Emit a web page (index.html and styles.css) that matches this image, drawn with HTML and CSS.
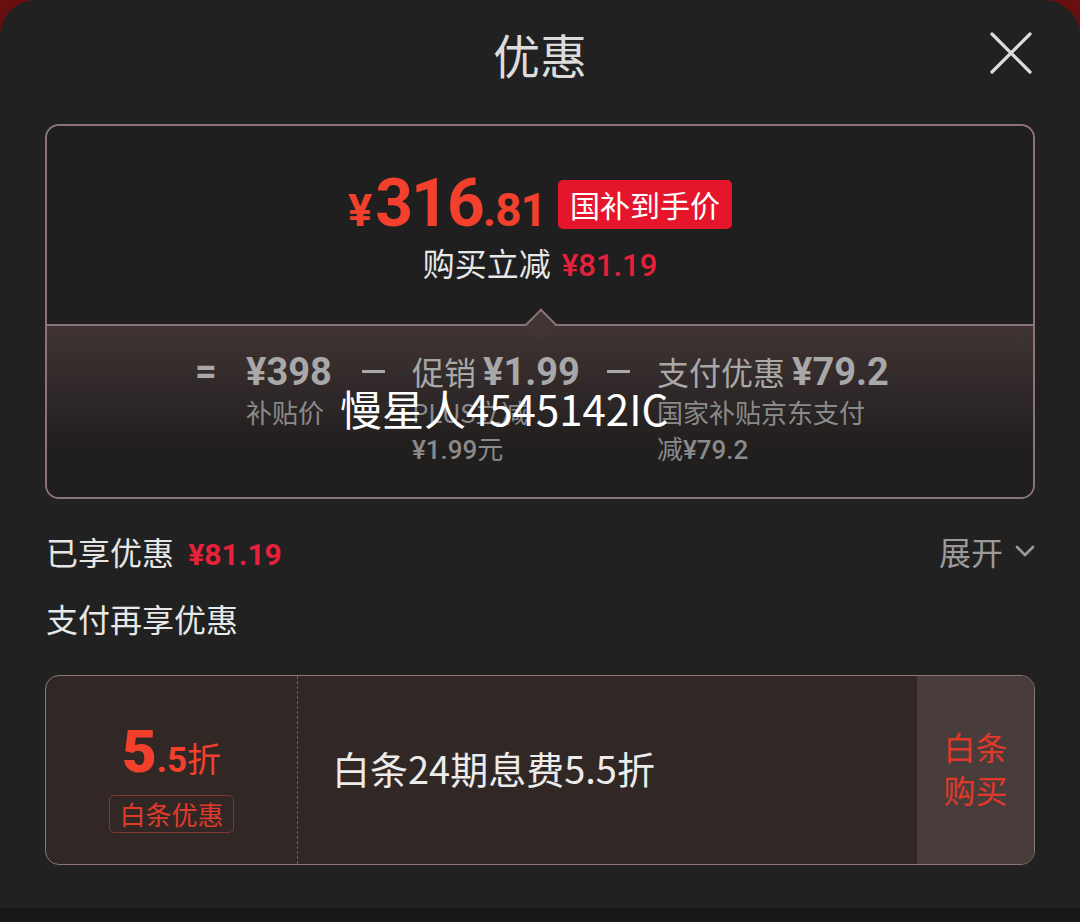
FILE: index.html
```html
<!DOCTYPE html>
<html lang="zh-CN">
<head>
<meta charset="utf-8">
<title>优惠</title>
<link rel="stylesheet" href="styles.css">
</head>
<body>
<div class="sheet">
  <header class="head">
    <div class="head-spacer"></div>
    <h1 class="title">优惠</h1>
    <button class="close" aria-label="关闭">
      <svg width="42" height="42" viewBox="0 0 42 42"><path d="M2 2L40 40M40 2L2 40" stroke="#dcdcdc" stroke-width="3.2" stroke-linecap="round" fill="none"/></svg>
    </button>
  </header>

  <section class="summary">
    <div class="summary-top">
      <div class="price-row">
        <span class="price"><span class="yen">¥</span><span class="int">316</span><span class="dec">.81</span></span>
        <span class="badge">国补到手价</span>
      </div>
      <div class="saved">购买立减 <span class="saved-amt">¥81.19</span></div>
    </div>
    <div class="summary-bottom">
      <span class="caret"></span>
      <div class="formula">
        <span class="op op-eq">=</span>
        <div class="term t1">
          <div class="term-main"><span class="num">¥398</span></div>
          <div class="term-sub">补贴价</div>
        </div>
        <span class="op op-minus"></span>
        <div class="term t2">
          <div class="term-main">促销 <span class="num">¥1.99</span></div>
          <div class="term-sub">PLUS立减 <span class="snum">¥1.99</span>元</div>
        </div>
        <span class="op op-minus"></span>
        <div class="term t3">
          <div class="term-main">支付优惠 <span class="num">¥79.2</span></div>
          <div class="term-sub">国家补贴京东支付减<span class="snum">¥79.2</span></div>
        </div>
      </div>
    </div>
  </section>

  <div class="enjoyed">
    <div class="enjoyed-left">已享优惠 <span class="enjoyed-amt">¥81.19</span></div>
    <div class="expand">展开
      <svg width="20" height="12" viewBox="0 0 20 12"><path d="M2 2L10 10L18 2" stroke="#9a9a9a" stroke-width="2.6" fill="none" stroke-linecap="round" stroke-linejoin="round"/></svg>
    </div>
  </div>

  <h2 class="subhead">支付再享优惠</h2>

  <div class="coupon">
    <div class="coupon-left">
      <div class="discount"><span class="d-big">5</span><span class="d-small">.5</span><span class="d-unit">折</span></div>
      <span class="tag">白条优惠</span>
    </div>
    <div class="coupon-mid">白条24期息费5.5折</div>
    <div class="coupon-btn">白条<br>购买</div>
  </div>

  <div class="watermark">慢星人4545142IC</div>
</div>
<div class="foot"></div>
</body>
</html>
```

FILE: styles.css
```css
* { box-sizing: border-box; margin: 0; padding: 0; }

body {
  width: 1080px;
  height: 922px;
  overflow: hidden;
  background: #6a0f0f;
  font-family: "Noto Sans CJK SC", "Noto Sans", sans-serif;
}

.sheet {
  position: relative;
  height: 908px;
  background: #212121;
  border-radius: 36px 36px 0 0;
}

.foot {
  height: 14px;
  background: #181818;
}

.head {
  height: 106px;
  display: grid;
  grid-template-columns: 1fr auto 1fr;
  align-items: center;
  padding: 0 48px;
}

.title {
  font-size: 47px;
  font-weight: 400;
  color: #dcdcdc;
  line-height: 1;
}

.close {
  justify-self: end;
  width: 42px;
  height: 42px;
  background: none;
  border: 0;
  display: flex;
}

.summary {
  margin: 18px 45px 0;
  height: 375px;
  border: 2px solid #8b7378;
  border-radius: 14px;
  overflow: hidden;
}

.summary-top {
  height: 198px;
  display: flex;
  flex-direction: column;
  align-items: center;
  padding-top: 50px;
  background: #1f1f1f;
}

.price-row {
  display: flex;
  align-items: center;
  gap: 12px;
  height: 56px;
}

.price {
  display: flex;
  align-items: baseline;
  color: #f2402c;
  font-family: Roboto, "Liberation Sans", sans-serif;
  font-weight: 700;
  line-height: 1;
}

.yen { font-size: 45px; margin-right: 3px; }
.int { font-size: 66px; letter-spacing: -2px; }
.dec { font-size: 46px; letter-spacing: -1px; }

.badge {
  height: 49px;
  line-height: 49px;
  padding: 0 12px;
  background: #e5162b;
  color: #fff;
  font-size: 30px;
  border-radius: 5px;
}

.saved {
  margin-top: 8px;
  font-size: 32px;
  line-height: 44px;
  color: #e8e8e8;
}

.saved-amt {
  margin-left: 4px;
  color: #e8203a;
  font-family: Roboto, "Liberation Sans", sans-serif;
  font-weight: 500;
  font-size: 31px;
}

.summary-bottom {
  position: relative;
  height: 173px;
  border-top: 2px solid #8b7378;
  background: linear-gradient(#403434, #211e1e 72%);
}

.caret {
  position: absolute;
  left: 483px;
  top: -13px;
  width: 22px;
  height: 22px;
  background: #403434;
  border-top: 2px solid #8b7378;
  border-left: 2px solid #8b7378;
  transform: rotate(45deg);
}

.formula {
  display: flex;
  justify-content: center;
  align-items: flex-start;
  padding-top: 23px;
  color: #a8a8a8;
}

.op {
  height: 44px;
  display: flex;
  align-items: center;
}

.op-eq {
  width: 22px;
  margin-right: 29px;
  font-family: Roboto, "Liberation Sans", sans-serif;
  font-weight: 700;
  font-size: 38px;
}

.op-minus::before {
  content: "";
  width: 23px;
  height: 3px;
  background: #a8a8a8;
}

.op-minus {
  width: 23px;
  margin-right: 27px;
}

.term-main {
  white-space: nowrap;
  font-size: 32px;
  line-height: 44px;
}

.num {
  font-family: Roboto, "Liberation Sans", sans-serif;
  font-weight: 700;
  font-size: 38px;
}

.term-sub {
  font-size: 26px;
  line-height: 36px;
  color: #8a8a8a;
}

.snum {
  font-family: Roboto, "Liberation Sans", sans-serif;
  font-weight: 500;
  font-size: 26px;
  line-height: 1;
}

.t1 { margin-right: 30px; }
.t2 { width: 165px; margin-right: 30px; }
.t3 { width: 228px; }

.enjoyed {
  margin: 30px 45px 0 46px;
  display: flex;
  justify-content: space-between;
  align-items: center;
  height: 44px;
}

.enjoyed-left {
  font-size: 32px;
  color: #e6e6e6;
}

.enjoyed-amt {
  margin-left: 7px;
  color: #e8203a;
  font-family: Roboto, "Liberation Sans", sans-serif;
  font-weight: 700;
  font-size: 30px;
}

.expand {
  display: flex;
  align-items: center;
  gap: 12px;
  font-size: 32px;
  color: #9a9a9a;
}

.subhead {
  margin: 23px 46px 0;
  font-size: 32px;
  font-weight: 400;
  line-height: 44px;
  color: #e8e8e8;
}

.coupon {
  margin: 35px 45px 0;
  height: 190px;
  display: flex;
  background: #312826;
  border: 1px solid #8a7772;
  border-radius: 14px;
  overflow: hidden;
}

.coupon-left {
  width: 252px;
  border-right: 1px dashed #6f625e;
  display: flex;
  flex-direction: column;
  align-items: center;
  justify-content: center;
  padding-top: 14px;
}

.discount {
  display: flex;
  align-items: baseline;
  color: #f2402c;
  line-height: 1;
}

.d-big {
  font-family: Roboto, "Liberation Sans", sans-serif;
  font-weight: 900;
  font-size: 60px;
}

.d-small {
  font-family: Roboto, "Liberation Sans", sans-serif;
  font-weight: 700;
  font-size: 35px;
}

.d-unit {
  font-size: 34px;
}

.tag {
  margin-top: 13px;
  height: 38px;
  line-height: 36px;
  padding: 0 9px;
  border: 1px solid #7e3830;
  border-radius: 5px;
  color: #e03a2a;
  font-size: 26px;
}

.coupon-mid {
  flex: 1;
  display: flex;
  align-items: center;
  padding-left: 34px;
  padding-bottom: 6px;
  font-size: 38px;
  color: #ececec;
}

.coupon-btn {
  width: 117px;
  display: flex;
  align-items: center;
  justify-content: center;
  text-align: center;
  background: #493d3c;
  color: #e0392a;
  font-size: 32px;
  line-height: 43px;
  padding-bottom: 4px;
}

.watermark {
  position: absolute;
  left: 340px;
  top: 387px;
  font-size: 42px;
  line-height: 1;
  color: #ffffff;
  white-space: nowrap;
}
```
